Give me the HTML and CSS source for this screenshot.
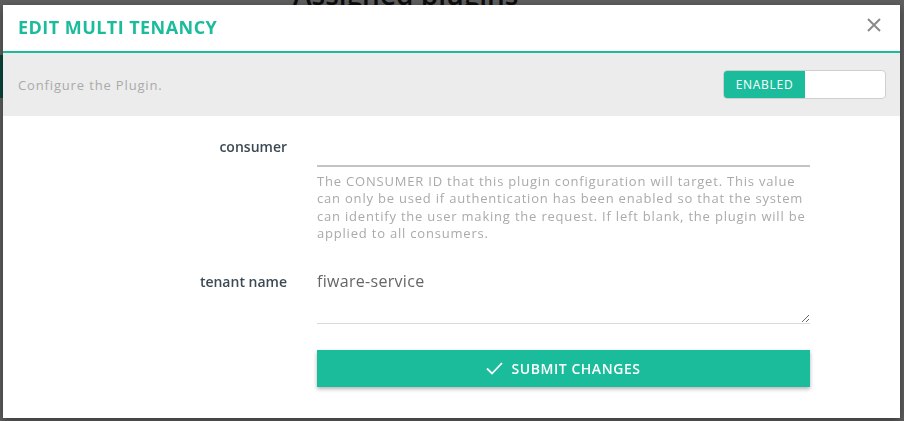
FILE: index.html
```html
<!DOCTYPE html>
<html>
<head>
<meta charset="utf-8">
<link rel="stylesheet" href="styles.css">
</head>
<body>
<div class="page">
  <nav class="side">
    <div class="side-item active"></div>
    <div class="side-item"></div>
  </nav>
  <main class="content">
    <h2 class="page-title">Assigned plugins</h2>
  </main>
</div>
<div class="backdrop"></div>
<div class="modal">
  <div class="modal-head">
    <h3 class="modal-title">EDIT MULTI TENANCY</h3>
    <button class="close" aria-label="close">
      <svg width="14" height="14" viewBox="0 0 14 14"><path d="M1 1L13 13M13 1L1 13" stroke="#8a8a8a" stroke-width="2" fill="none"/></svg>
    </button>
  </div>
  <div class="modal-sub">
    <span class="sub-text">Configure the Plugin.</span>
    <div class="toggle">
      <span class="toggle-on">ENABLED</span>
      <span class="toggle-off"></span>
    </div>
  </div>
  <form class="modal-body">
    <label class="f-label">consumer</label>
    <div class="f-field">
      <input class="f-input" type="text">
      <p class="f-help">The CONSUMER ID that this plugin configuration will target. This value can only be used if authentication has been enabled so that the system can identify the user making the request. If left blank, the plugin will be applied to all consumers.</p>
    </div>
    <label class="f-label l2">tenant name</label>
    <div class="f-field">
      <textarea class="f-area">fiware-service</textarea>
    </div>
    <div></div>
    <div class="f-field">
      <button type="button" class="submit">
        <svg width="17" height="13" viewBox="0 0 17 13"><path d="M1 6.5L6 11.5L16 1" stroke="#fff" stroke-width="1.8" fill="none"/></svg>
        <span>SUBMIT CHANGES</span>
      </button>
    </div>
  </form>
</div>
</body>
</html>
```
FILE: styles.css
```css
* { box-sizing: border-box; }
html, body { margin: 0; padding: 0; }
body {
  font-family: "Open Sans", "Noto Sans", sans-serif;
  background: #fff;
  width: 904px;
  height: 421px;
  overflow: hidden;
}
.page { display: flex; height: 421px; }
.side { width: 200px; padding-top: 55px; display: flex; flex-direction: column; }
.side-item { height: 43px; }
.side-item.active { background: #1abc9c; }
.content { flex: 1; padding-left: 93px; }
.page-title {
  margin: -25px 0 0;
  font-size: 28px;
  font-weight: 600;
  color: #222;
}
.backdrop {
  position: fixed;
  inset: 0;
  background: rgba(0, 0, 0, 0.63);
}
.modal {
  position: fixed;
  left: 3px;
  top: 5px;
  width: 897px;
  height: 413px;
  background: #fff;
  box-shadow: 0 3px 9px rgba(0,0,0,0.4);
  display: flex;
  flex-direction: column;
}
.modal-head {
  height: 48px;
  border-bottom: 2px solid #1abc9c;
  display: flex;
  align-items: center;
  justify-content: space-between;
  padding: 0 19px 2px 15px;
}
.modal-title {
  margin: 0;
  font-size: 18px;
  font-weight: 700;
  color: #1abc9c;
  letter-spacing: 0.45px;
}
.close {
  border: 0;
  background: none;
  padding: 0;
  width: 14px;
  height: 14px;
  display: flex;
  margin-top: -4px;
}
.modal-sub {
  height: 63px;
  background: #ececec;
  display: flex;
  align-items: center;
  justify-content: space-between;
  padding: 0 14px 0 15px;
}
.sub-text {
  font-size: 13px;
  color: #aaa;
  letter-spacing: 0.85px;
}
.toggle {
  width: 163px;
  height: 29px;
  border: 1px solid #cfcfcf;
  border-radius: 4px;
  overflow: hidden;
  display: flex;
  background: #fff;
}
.toggle-on {
  width: 81px;
  background: #1abc9c;
  color: #fff;
  font-size: 12px;
  letter-spacing: 0.7px;
  display: flex;
  align-items: center;
  justify-content: center;
}
.toggle-off { flex: 1; }
.modal-body {
  margin: 0;
  padding: 18px 0 0;
  display: grid;
  grid-template-columns: 284px 493px;
  column-gap: 30px;
  align-content: start;
}
.f-label {
  text-align: right;
  font-size: 14px;
  font-weight: 600;
  color: #3d4a55;
  line-height: 20px;
  padding-top: 3px;
}
.f-label.l2 { padding-top: 6px; margin-top: 23px; }
.f-field { display: flex; flex-direction: column; }
.f-input {
  height: 33px;
  border: 0;
  border-bottom: 2px solid #c4c4c4;
  outline: none;
  font: inherit;
  font-size: 16px;
  padding: 0;
}
.f-help {
  margin: 6px 0 0;
  font-size: 13px;
  line-height: 17.4px;
  color: #aaa;
  letter-spacing: 0.8px;
}
.f-area {
  margin-top: 23px;
  height: 58px;
  border: 0;
  border-bottom: 1px solid #dadada;
  outline: none;
  font-family: inherit;
  font-size: 16px;
  line-height: 20px;
  color: #666;
  letter-spacing: 0.3px;
  padding: 5px 0 0;
  resize: vertical;
}
.submit {
  margin-top: 26px;
  height: 37px;
  border: 0;
  background: #1abc9c;
  color: #fff;
  font-family: inherit;
  font-size: 14px;
  font-weight: 600;
  letter-spacing: 0.55px;
  display: flex;
  align-items: center;
  justify-content: center;
  gap: 8px;
  box-shadow: 0 2px 4px rgba(0,0,0,0.3);
}
```
